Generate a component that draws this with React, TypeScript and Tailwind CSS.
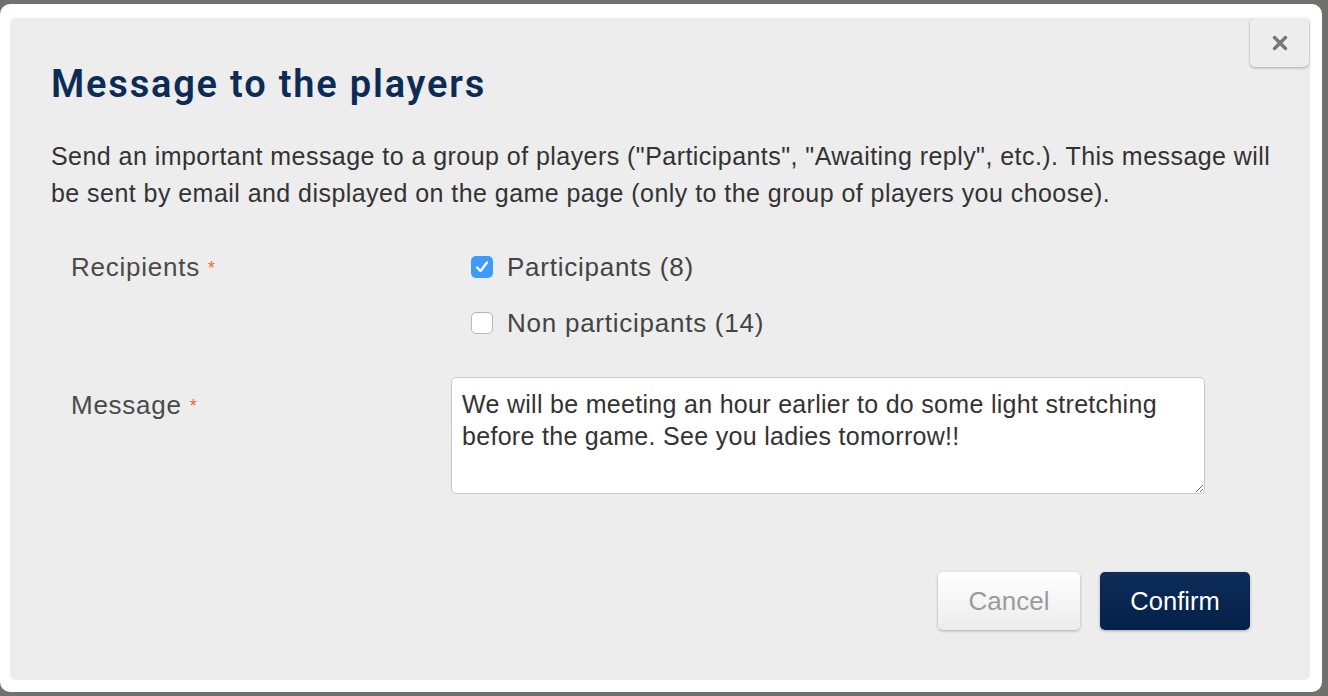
import React, { useState } from "react";

const Checkbox = ({ checked, onChange }: { checked: boolean; onChange: () => void }) => (
  <button
    type="button"
    onClick={onChange}
    className={
      checked
        ? "w-[22px] h-[22px] rounded-[5px] bg-[#3d9bfd] flex items-center justify-center shrink-0"
        : "w-[22px] h-[22px] rounded-[5px] bg-white border border-[#b8b8b8] shadow-[inset_0_1px_1px_rgba(0,0,0,0.05)] shrink-0"
    }
  >
    {checked && (
      <svg width="16" height="16" viewBox="0 0 16 16">
        <path d="M3 8.5 L6.5 12 L13 3.5" stroke="white" strokeWidth="2.4" fill="none" strokeLinecap="round" strokeLinejoin="round" />
      </svg>
    )}
  </button>
);

const Required = () => <span className="text-[#f26a1f] text-[18px] ml-[8px] relative -top-[2px] tracking-normal">*</span>;

export default function App() {
  const [participants, setParticipants] = useState(true);
  const [nonParticipants, setNonParticipants] = useState(false);
  const [message, setMessage] = useState(
    "We will be meeting an hour earlier to do some light stretching before the game. See you ladies tomorrow!!"
  );

  return (
    <div className="w-[1328px] h-[696px] bg-[#6f716d] overflow-hidden font-['Liberation_Sans',Arial,sans-serif]">
      <div className="mt-[4px] w-[1322px] h-[688px] bg-white rounded-[10px] pt-[14px] pl-[10px]">
        <div className="relative w-[1300px] h-[662px] bg-[#ededed] rounded-[6px] pt-[46px] pl-[41px] pr-[30px]">
          {/* close */}
          <button className="absolute top-0 right-[1px] w-[59px] h-[49px] rounded-[5px] bg-[#ededed] shadow-[0_1px_3px_rgba(0,0,0,0.3)] flex items-center justify-center">
            <svg width="18" height="18" viewBox="0 0 18 18">
              <path d="M3.5 3.5 L14.5 14.5 M14.5 3.5 L3.5 14.5" stroke="#777" strokeWidth="3.4" strokeLinecap="round" />
            </svg>
          </button>

          <h1 className="text-[38px] leading-[40px] font-semibold text-[#0c2c55] tracking-[1.8px] font-['Roboto',sans-serif]">
            Message to the players
          </h1>

          <p className="mt-[34px] text-[25px] leading-[37px] tracking-[0.45px] text-[#333]">
            Send an important message to a group of players ("Participants", "Awaiting reply", etc.). This message will be sent by email and displayed on the game page (only to the group of players you choose).
          </p>

          <div className="mt-[39px] flex">
            <div className="w-[400px] pl-[20px] text-[26px] leading-[32px] tracking-[0.75px] text-[#4a4a4a]">
              Recipients
              <Required />
            </div>
            <div className="pl-[20px] flex flex-col gap-[24px]">
              <label className="flex items-center gap-[14px] h-[32px] text-[26px] tracking-[0.75px] text-[#444] cursor-pointer">
                <Checkbox checked={participants} onChange={() => setParticipants(!participants)} />
                Participants (8)
              </label>
              <label className="flex items-center gap-[14px] h-[32px] text-[26px] tracking-[0.75px] text-[#444] cursor-pointer">
                <Checkbox checked={nonParticipants} onChange={() => setNonParticipants(!nonParticipants)} />
                Non participants (14)
              </label>
            </div>
          </div>

          <div className="mt-[38px] flex">
            <div className="w-[400px] pl-[20px] pt-[12px] text-[26px] leading-[32px] tracking-[0.75px] text-[#4a4a4a]">
              Message
              <Required />
            </div>
            <textarea
              value={message}
              onChange={(e) => setMessage(e.target.value)}
              className="w-[754px] h-[117px] bg-white border border-[#c8c8c8] rounded-[5px] pt-[10px] px-[10px] text-[25px] leading-[32px] tracking-[0.3px] text-[#333] outline-none"
            />
          </div>

          <div className="mt-[78px] flex justify-end gap-[20px] pr-[30px]">
            <button className="w-[142px] h-[58px] rounded-[5px] bg-gradient-to-b from-white to-[#ececec] shadow-[0_1px_3px_rgba(0,0,0,0.3)] text-[26px] text-[#9b9b9b]">
              Cancel
            </button>
            <button className="w-[150px] h-[58px] rounded-[5px] bg-gradient-to-b from-[#0d2c58] to-[#05214a] shadow-[0_1px_3px_rgba(0,0,0,0.3)] text-[25.5px] font-medium text-white">
              Confirm
            </button>
          </div>
        </div>
      </div>
    </div>
  );
}
